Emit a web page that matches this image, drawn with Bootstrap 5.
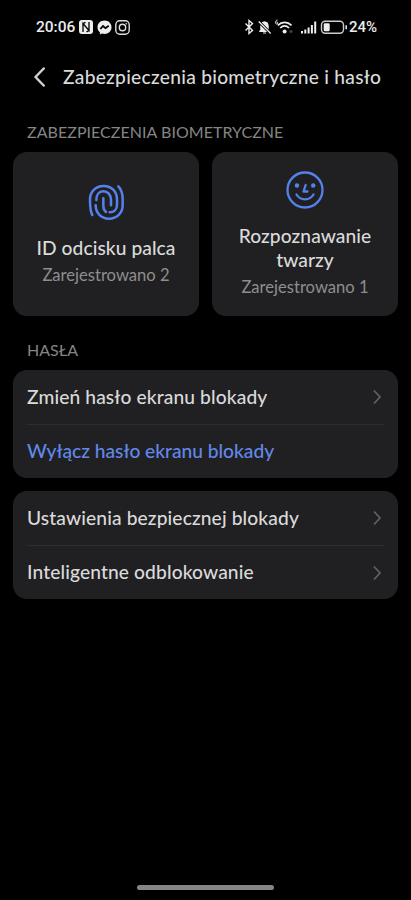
<!DOCTYPE html>
<html lang="pl" data-bs-theme="dark">
<head>
<meta charset="utf-8">
<meta name="viewport" content="width=device-width, initial-scale=1">
<title>Zabezpieczenia biometryczne i hasło</title>
<link href="https://cdn.jsdelivr.net/npm/bootstrap@5.3.0/dist/css/bootstrap.min.css" rel="stylesheet">
<style>
body{background:#000;color:#dadada;font-family:Lato,"Noto Sans",sans-serif;font-size:19.2px;font-weight:500;height:900px;overflow:hidden}
svg{display:block;flex:none}
.status-bar{height:54px;padding:0 34px 0 36px;color:#ececec;font:500 15px/20px Roboto,sans-serif}
.status-time{width:43px;font-size:15.5px}
.status-icons{margin-right:1px}
.title-bar{height:46px;padding-left:33px}
.title-bar h1{color:#dadada;font-size:19.2px;line-height:24px;letter-spacing:.27px;margin-left:16px;white-space:nowrap}
.section-name{color:#858585;font-size:16px;line-height:20px;font-weight:400;padding-left:27px}
.section-biometric{padding-top:22px;letter-spacing:.04px}
.section-passwords{padding:24px 0 10px 27px}
.tiles{margin:10px 13px 0;gap:13px}
.tile{flex:1 1 0;height:164px;background:#202022;border-radius:14px;line-height:24px;letter-spacing:.07px}
.tile-icon{color:#5581ed;margin-bottom:15px}
.tile small{color:#8e8e90;font-size:16.6px;line-height:20px;margin-top:5px;font-weight:400;letter-spacing:0}
.panel{margin:0 13px;background:#202022;border-radius:14px;padding:0 14px;height:107.5px}
.panel+.panel{margin-top:13.5px}
.panel a{height:54px;color:#dadada;letter-spacing:.12px;white-space:nowrap}
.panel a+a{border-top:1px solid #2d2d2f}
.panel a.accent{color:#6288e8;letter-spacing:-.02px}
.home-bar{width:137px;height:5px;border-radius:3px;background:#858585;margin-bottom:10px}
</style>
</head>
<body class="d-flex flex-column">
<header>
<div class="status-bar d-flex align-items-center">
  <span class="status-time">20:06</span>
  <svg width="14" height="14" viewBox="0 0 14 14"><rect width="14" height="14" rx="3" fill="#eee"/><path d="M4 12V3.500L10 10.500V2M4 3.500 6.500 2.300M10 10.500 7.500 11.800" fill="none" stroke="#000" stroke-width="1.300"/></svg>
  <svg class="ms-1" width="15" height="15" viewBox="0 0 15 15"><path d="M7.500.5C3.400.5.5 3.400.5 7.200c0 2.100.9 3.900 2.400 5.100v2.200l2.100-1c.8.2 1.600.4 2.500.4 4.100 0 7-2.900 7-6.700S11.600.5 7.500.5Z" fill="#eee"/><path d="M3.300 9 6 6l2.500 2.200L11.700 5.700" fill="none" stroke="#000" stroke-width="1.800"/></svg>
  <svg width="18" height="15" viewBox="-3 0 18 15" fill="none" stroke="#ddd" stroke-width="1.400"><rect x=".8" y=".8" width="13.400" height="13.400" rx="4"/><circle cx="7.500" cy="7.500" r="3.200"/><circle cx="11.300" cy="3.700" r=".5" fill="#ddd" stroke-width=".6"/></svg>
  <svg class="status-icons ms-auto" width="104" height="20" viewBox="0 0 104 20" fill="none" stroke="#eee" stroke-width="1.400">
    <path d="m1.500 6.500 7 7-3.500 3V3.500l3.500 3-7 7"/>
    <path d="M15.500 14.500h10l-1.300-2V8.500a3.700 3.700 0 0 0-7.400 0v4ZM19 16h3" fill="#eee" stroke-width="1"/><path d="m14.700 4.500 12 12" stroke="#000" stroke-width="3"/><path d="m14.700 4.500 12 12" stroke-width="1.300"/>
    <path d="M33.500 3c-2.300.2-2.700 4-.9 4 1.700 0 1.600-2.200-.2-2" stroke-width="1"/>
    <path d="M33.800 8.300c4-3.900 9.700-3.900 13.700 0M36.200 11c2.700-2.600 6.200-2.600 8.900 0" stroke-width="1.700"/><circle cx="40.600" cy="14.400" r="2" fill="#eee" stroke="none"/><path d="M45.500 14.500h3m-1.500-1.500v3" stroke="#444"/>
    <path d="M58 16.500v-2.500M61.300 16.500v-4M64.600 16.500v-6M67.900 16.500v-8.500M71.200 16.500V4.500" stroke-width="2"/>
    <rect x="77.500" y="4.200" width="22" height="12" rx="3.600" stroke="#ccc" stroke-width="1.400"/><rect x="79.700" y="6.200" width="6" height="8" rx="1.300" fill="#eee" stroke="none"/><path d="M102.200 8.200v4" stroke-width="1.500"/>
  </svg>
  <span>24%</span>
</div>
<div class="title-bar d-flex align-items-center">
  <svg width="14" height="20" viewBox="0 0 14 20"><path d="M10.700 1.500 2.500 10l8.200 8.500" fill="none" stroke="#d0d0d0" stroke-width="2.500" stroke-linecap="round" stroke-linejoin="round"/></svg>
  <h1 class="mb-0">Zabezpieczenia biometryczne i hasło</h1>
</div>
</header>
<main>
<div class="section-name section-biometric">ZABEZPIECZENIA BIOMETRYCZNE</div>
<div class="tiles d-flex">
  <section class="tile d-flex flex-column align-items-center justify-content-center text-center">
    <svg class="tile-icon" width="38" height="38" viewBox="21 24 114 114" fill="none" stroke="currentColor" stroke-width="7.500" stroke-linecap="round">
      <path d="M37 120C30 108 30 94 30 74c0-23 16-41 41-41s40 18 40 41v16c0 13-9 22-22 22"/>
      <path d="M115 34c10 10 13 22 13 38v19c0 23-17 40-41 40S47 114 47 91"/>
      <path d="M49 75c0-16 8-26 21-26s23 10 23 26v16M70 70v22c0 9 2 14 8 19"/>
    </svg>
    <div>ID odcisku palca</div>
    <small>Zarejestrowano 2</small>
  </section>
  <section class="tile d-flex flex-column align-items-center justify-content-center text-center">
    <svg class="tile-icon" width="38" height="38" viewBox="0 0 38 38" fill="none" stroke="currentColor" stroke-width="2.300" stroke-linecap="round" stroke-linejoin="round"><circle cx="19" cy="19" r="17.500"/><circle cx="11" cy="14.500" r="2.200" fill="currentColor" stroke="none"/><circle cx="27.200" cy="14.500" r="2.200" fill="currentColor" stroke="none"/><path d="M19.700 14 17.500 20.500H21.500M10.500 23.500c4 6.500 13 6.500 17 0"/></svg>
    <div>Rozpoznawanie<br>twarzy</div>
    <small>Zarejestrowano 1</small>
  </section>
</div>
<div class="section-name section-passwords">HASŁA</div>
<nav class="panel">
  <a href="#" class="d-flex align-items-center justify-content-between text-decoration-none">Zmień hasło ekranu blokady<svg width="13" height="16" viewBox="0 0 13 16"><path d="m3 1.500 6 6.500-6 6.500" fill="none" stroke="#626264" stroke-width="1.700"/></svg></a>
  <a href="#" class="accent d-flex align-items-center text-decoration-none">Wyłącz hasło ekranu blokady</a>
</nav>
<nav class="panel">
  <a href="#" class="d-flex align-items-center justify-content-between text-decoration-none">Ustawienia bezpiecznej blokady<svg width="13" height="16" viewBox="0 0 13 16"><path d="m3 1.500 6 6.500-6 6.500" fill="none" stroke="#626264" stroke-width="1.700"/></svg></a>
  <a href="#" class="d-flex align-items-center justify-content-between text-decoration-none">Inteligentne odblokowanie<svg width="13" height="16" viewBox="0 0 13 16"><path d="m3 1.500 6 6.500-6 6.500" fill="none" stroke="#626264" stroke-width="1.700"/></svg></a>
</nav>
</main>
<div class="home-bar mt-auto mx-auto"></div>
<script src="https://cdn.jsdelivr.net/npm/bootstrap@5.3.0/dist/js/bootstrap.bundle.min.js"></script>
</body>
</html>
